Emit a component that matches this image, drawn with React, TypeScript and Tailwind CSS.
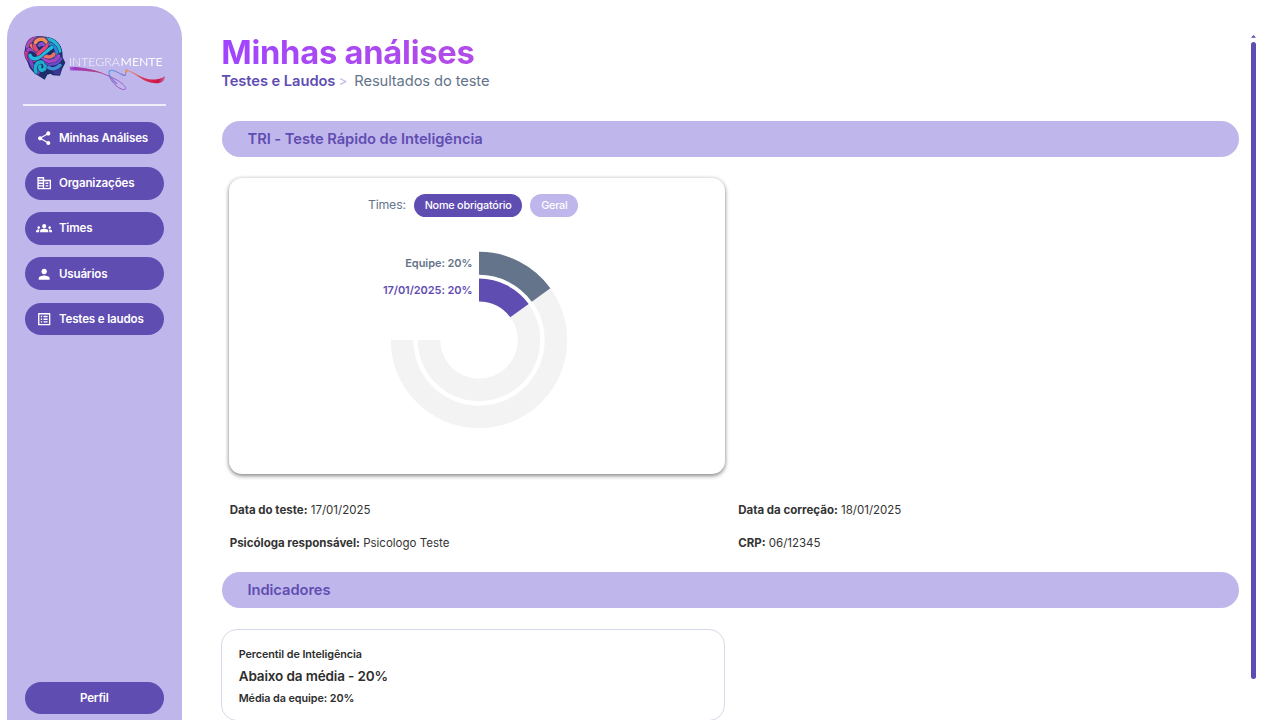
import type { ReactNode } from "react";
import { MdShare, MdCorporateFare, MdGroups, MdPerson, MdOutlineListAlt } from "react-icons/md";

const menu = [
  { label: "Minhas Análises", Icon: MdShare },
  { label: "Organizações", Icon: MdCorporateFare },
  { label: "Times", Icon: MdGroups },
  { label: "Usuários", Icon: MdPerson },
  { label: "Testes e laudos", Icon: MdOutlineListAlt },
];

// Woven strands of the head, in drawing order.
const strands = [
  { d: "M34 58C38 38 52 30 64 32", color: "#b04ab0" },
  { d: "M92 34C112 34 128 50 131 70", color: "#22b6d2" },
  { d: "M32 72C30 88 40 102 52 98C62 94 74 84 84 80", color: "#d12f8e" },
  { d: "M40 84C44 108 54 124 66 134", color: "#7c45c6" },
  { d: "M98 46C116 52 124 66 122 80C118 94 104 92 94 84", color: "#2a86d6" },
  { d: "M60 132C54 116 62 100 76 102C90 104 92 122 80 126C72 128 68 120 72 114", color: "#1eaecb" },
  { d: "M98 118C108 126 122 122 132 112", color: "#3f8fd8" },
  { d: "M92 104C106 112 124 108 134 92", color: "#6b4bc8" },
  { d: "M36 66C46 60 56 66 64 74C76 86 86 98 98 100C112 100 124 94 128 84", color: "#a544c4" },
  { d: "M46 52C54 66 68 70 80 80C92 90 106 90 114 78", color: "#ee7067" },
  { d: "M108 58C96 66 84 76 72 86C60 96 46 94 42 82", color: "#25b9dc" },
  { d: "M62 66C50 54 54 34 72 32C90 30 98 46 90 56C84 64 74 70 66 78", color: "#e2477c" },
  { d: "M58 44C64 32 82 30 90 42", color: "#f58b58" },
  { d: "M70 52C74 46 80 46 82 50", color: "#8351d0" },
];

function Logo() {
  return (
    <svg className="h-[60px] w-[146px] shrink-0" viewBox="20 32 146 60" fill="none">
      <defs>
        <linearGradient id="swoosh" x1="68" y1="0" x2="126" y2="0" gradientUnits="userSpaceOnUse">
          <stop offset="0" stopColor="#9a4fd0" />
          <stop offset=".5" stopColor="#b8408f" />
          <stop offset="1" stopColor="#9a55cc" />
        </linearGradient>
        <linearGradient id="loop" x1="110" y1="70" x2="124" y2="90" gradientUnits="userSpaceOnUse">
          <stop offset="0" stopColor="#4c9be0" />
          <stop offset="1" stopColor="#9b45cf" />
        </linearGradient>
        <linearGradient id="ribbon" x1="69" y1="0" x2="100" y2="0" gradientUnits="userSpaceOnUse">
          <stop offset="0" stopColor="#9b3ad0" stopOpacity=".5" />
          <stop offset=".2" stopColor="#9b3ac0" />
          <stop offset="1" stopColor="#b8407f" />
        </linearGradient>
        <linearGradient id="tail" x1="126" y1="70" x2="165" y2="82" gradientUnits="userSpaceOnUse">
          <stop offset="0" stopColor="#f3914f" />
          <stop offset=".45" stopColor="#dc3157" />
          <stop offset=".85" stopColor="#cc1747" />
          <stop offset="1" stopColor="#c43f80" stopOpacity=".5" />
        </linearGradient>
      </defs>
      <g transform="translate(16 28) scale(.3333)" strokeLinecap="round" strokeLinejoin="round">
        <path d="M74 25C48 25 27 44 26 70C26 88 34 98 38 112C44 130 60 140 86 155L94 140L104 137L110 142L132 143L138 124L148 104L140 88C142 50 118 26 74 25Z" fill="#1d2d6b" />
        <path d="M112 124L134 116L132 140L112 138Z" fill="#3f3596" />
        {strands.map(({ d, color }) => (
          <g key={d}>
            <path d={d} stroke="#1d2d6b" strokeWidth="13" />
            <path d={d} stroke={color} strokeWidth="10.500" />
          </g>
        ))}
      </g>
      <text x="68.800" y="66" fill="white" fontFamily="Lato" fontWeight="300" fontSize="12.300" textLength="51" opacity=".85">INTEGRA</text>
      <text x="120.600" y="66" fill="white" fontFamily="Lato" fontWeight="400" fontSize="12.300" textLength="42" opacity=".95">MENTE</text>
      <path d="M70 68.800C89 67 103 73 117 80C122 83 128 88 125 89.400C121 91 111 83 109 75" stroke="url(#swoosh)" strokeWidth=".9" />
      <path d="M69.500 66.800C82 66.800 91 69 103 73.500C91 70.800 80 70.800 70 70.500Z" fill="url(#ribbon)" />
      <path d="M117 84C111 79 107.500 73 109.500 71C112 68.500 117 72 121 74C128 78 124 73 127 69.500" stroke="url(#loop)" strokeWidth="1.100" />
      <path d="M126 69.500C135 72 143 80 153 79.500C159 79.500 162 78 165 76C165 81 162 83.300 156 83.300C144 83 137 74 128.500 71.200C126.500 71 126 73 125.500 75C125 73 125 71 126 69.500Z" fill="url(#tail)" />
    </svg>
  );
}

function Sidebar() {
  return (
    <aside className="mt-[6px] flex h-[760px] w-[174.500px] shrink-0 flex-col rounded-t-[32px] bg-[#bfb6eb] px-[17.500px]">
      <div className="-mx-[4.500px] h-[86px] shrink-0 pt-[26px]">
        <Logo />
      </div>
      <div className="-mx-[1.500px] mt-[12px] h-[1.500px] shrink-0 bg-[#f0edfb]" />
      <nav className="mt-[16.300px] flex flex-col gap-[12.500px]">
        {menu.map(({ label, Icon }) => (
          <a key={label} className="flex h-[32.700px] items-center rounded-full bg-[#5f4db2] pl-[11.500px] text-[11.600px] font-semibold tracking-[-0.17px] text-white">
            <Icon className="mr-[6.500px] size-[16.400px]" />
            <span className="pt-[1px]">{label}</span>
          </a>
        ))}
      </nav>
      <a className="mt-[346.500px] flex h-[32.700px] shrink-0 items-center justify-center rounded-full bg-[#5f4db2] pt-[1px] text-[11.600px] font-semibold tracking-[-0.17px] text-white">
        Perfil
      </a>
    </aside>
  );
}

function SectionBar({ children }: { children: ReactNode }) {
  return (
    <h2 className="ml-[1.300px] flex h-[36px] w-[1017px] shrink-0 items-center rounded-full bg-[#bfb6eb] pl-[25px] text-[14.700px] font-semibold tracking-[-0.05px] text-[#5f4db2]">
      {children}
    </h2>
  );
}

function arc(inner: number, outer: number, from: number, to: number) {
  const point = (r: number, deg: number) => {
    const a = (deg * Math.PI) / 180;
    return `${(100 + r * Math.sin(a)).toFixed(2)} ${(100 - r * Math.cos(a)).toFixed(2)}`;
  };
  const large = to - from > 180 ? 1 : 0;
  return `M${point(outer, from)}A${outer} ${outer} 0 ${large} 1 ${point(outer, to)}L${point(inner, to)}A${inner} ${inner} 0 ${large} 0 ${point(inner, from)}Z`;
}

function RadialChart() {
  return (
    <div className="mt-[23.300px] flex">
      <div className="flex w-[243.200px] flex-col items-end pt-[13.700px] text-[11px] font-semibold leading-[18px] tracking-[-0.06px]">
        <span className="text-[#64748b]">Equipe: 20%</span>
        <span className="mt-[9px] text-[#5f4db2]">17/01/2025: 20%</span>
      </div>
      <svg className="-ml-[93.400px] size-[200px]" viewBox="0 0 200 200">
        <path d={arc(65.7, 88.2, 0, 270)} fill="#f3f3f3" />
        <path d={arc(38.8, 61.2, 0, 270)} fill="#f3f3f3" />
        <path d={arc(65.2, 88.2, 0, 54)} fill="#64748b" />
        <path d={arc(38.6, 61.4, 0, 54)} fill="#5f4db2" />
      </svg>
    </div>
  );
}

function Field({ label, value }: { label: string; value: string }) {
  return (
    <p className="leading-[18px]">
      <b className="font-bold">{label}</b> {value}
    </p>
  );
}

export default function App() {
  return (
    <div className="flex h-[720px] w-[1280px] overflow-hidden bg-white pl-[7px] font-['Inter',sans-serif]">
      <Sidebar />
      <main className="ml-[39.700px] flex h-[800px] w-[1018px] shrink-0 flex-col pt-[32px]">
        <h1 className="h-[40px] w-[1018px] shrink-0 bg-linear-to-r from-[#a144ff] to-[#ec4899] bg-clip-text text-[32.700px] font-bold leading-[40px] tracking-[-0.25px] text-transparent">
          Minhas análises
        </h1>
        <div className="flex h-[19px] shrink-0 items-center text-[14.700px] leading-[19px]">
          <span className="font-semibold tracking-[-0.06px] text-[#5f4db2]">Testes e Laudos</span>
          <span className="ml-[3px] text-[13.500px] text-[#bfb6eb]">&gt;</span>
          <span className="ml-[7px] tracking-[-0.1px] text-[#64748b]">Resultados do teste</span>
        </div>
        <div className="h-[30px] shrink-0" />
        <SectionBar>TRI - Teste Rápido de Inteligência</SectionBar>
        <section className="ml-[8.200px] mt-[20.800px] h-[296px] w-[495.500px] shrink-0 rounded-[13px] bg-white pt-[16px] shadow-[0_2px_4px_rgba(0,0,0,0.42),0_0_4px_rgba(0,0,0,0.14)]">
          <div className="ml-[138.500px] flex h-[23px] items-center text-[12.300px] tracking-[-0.15px] text-[#64748b]">
            <span className="w-[38px]">Times:</span>
            <span className="ml-[8px] flex h-[23px] w-[108.500px] items-center justify-center rounded-full bg-[#5f4db2] pt-[1px] text-[10.800px] font-medium tracking-[-0.2px] text-white">
              Nome obrigatório
            </span>
            <span className="ml-[8px] flex h-[23px] w-[48px] items-center justify-center rounded-full bg-[#bfb6eb] pt-[1px] text-[10.800px] font-medium tracking-[-0.2px] text-white">
              Geral
            </span>
          </div>
          <RadialChart />
        </section>
        <div className="ml-[8.500px] mt-[27.200px] grid shrink-0 grid-cols-[508.500px_1fr] gap-y-[15px] text-[11.500px] text-[#333333]">
          <Field label="Data do teste:" value="17/01/2025" />
          <Field label="Data da correção:" value="18/01/2025" />
          <Field label="Psicóloga responsável:" value="Psicologo Teste" />
          <Field label="CRP:" value="06/12345" />
        </div>
        <div className="h-[20.300px] shrink-0" />
        <SectionBar>Indicadores</SectionBar>
        <section className="mt-[20.700px] h-[92.500px] w-[504px] shrink-0 rounded-[16px] border border-[#d5dae8] pl-[16.500px] pt-[15px] font-semibold text-[#2e2e2e]">
          <p className="pt-px text-[10.800px] leading-[17px] tracking-[-0.07px]">Percentil de Inteligência</p>
          <p className="mt-[3px] text-[13.500px] leading-[20px] tracking-[-0.13px]">Abaixo da média - 20%</p>
          <p className="mt-[3px] pt-px text-[10.800px] leading-[17px] tracking-[-0.07px]">Média da equipe: 20%</p>
        </section>
      </main>
      <div className="ml-[11.800px] flex w-[5px] flex-col items-center pt-[35px]">
        <svg className="h-[3px] w-[5px]" viewBox="0 0 5 3">
          <path d="M2.500 0L5 2.700H0Z" fill="#5f4db2" />
        </svg>
        <div className="mt-[4px] h-[637px] w-[4.700px] rounded-full bg-[#5f4db2]" />
      </div>
    </div>
  );
}
